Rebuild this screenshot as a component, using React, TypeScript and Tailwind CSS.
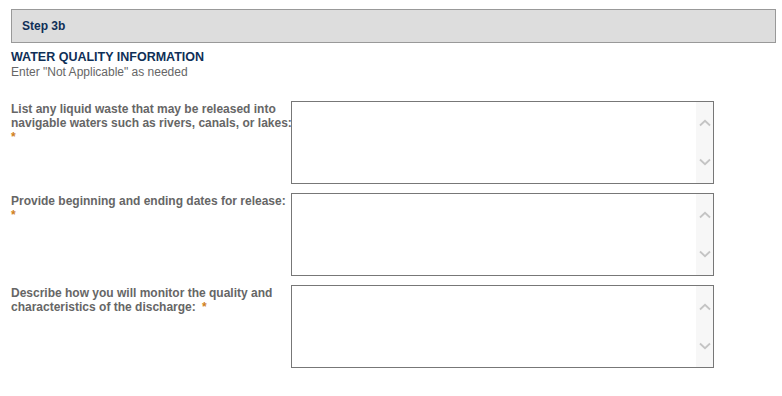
const FIELDS = [
  { label: 'List any liquid waste that may be released into navigable waters such as rivers, canals, or lakes:', starOwnLine: true },
  { label: 'Provide beginning and ending dates for release:', starOwnLine: true },
  { label: 'Describe how you will monitor the quality and characteristics of the discharge:', starOwnLine: false },
]

function FakeScrollbar() {
  return (
    <div className="w-[17px] flex-shrink-0 bg-[#f7f7f7] flex flex-col items-center justify-between pt-[17px] pb-[17px]">
      <svg width="12" height="8" viewBox="0 0 12 8">
        <path d="M1 6.5 L6 1.8 L11 6.5" fill="none" stroke="#c4c4c4" strokeWidth="1.8" />
      </svg>
      <svg width="12" height="8" viewBox="0 0 12 8">
        <path d="M1 1.5 L6 6.2 L11 1.5" fill="none" stroke="#c4c4c4" strokeWidth="1.8" />
      </svg>
    </div>
  )
}

export default function App() {
  return (
    <div className="bg-white min-h-[396px] w-[782px] font-['Liberation_Sans',Arial,sans-serif] text-[12px] leading-[14px]">
      <div className="pl-[11px] pr-[6px] pt-[9px]">
        {/* Step header */}
        <div className="h-[34px] border border-[#999] bg-[#dddddd] flex items-center pl-[10px]">
          <span className="font-bold text-[#0f2f57] text-[12px]">Step 3b</span>
        </div>

        {/* Section title */}
        <div className="mt-[7px]">
          <div className="font-bold text-[#0f2f57] text-[12.5px] leading-[15px]">WATER QUALITY INFORMATION</div>
          <div className="text-[#666] leading-[15px]">Enter "Not Applicable" as needed</div>
        </div>

        {/* Fields */}
        <div className="mt-[21px] flex flex-col gap-[9px]">
          {FIELDS.map(f => (
            <div key={f.label} className="flex">
              <label className="w-[283px] -mr-[3px] flex-shrink-0 font-bold text-[#666] pt-[1px]">
                {f.label}
                {f.starOwnLine ? <br /> : ' '}
                <span className={`text-[#d0811f] ${f.starOwnLine ? '' : 'ml-[3px]'}`}>*</span>
              </label>
              <div className="w-[423px] h-[83px] border border-[#777] flex bg-white">
                <textarea className="flex-1 resize-none outline-none p-1 text-[12px]" />
                <FakeScrollbar />
              </div>
            </div>
          ))}
        </div>
      </div>
    </div>
  )
}
